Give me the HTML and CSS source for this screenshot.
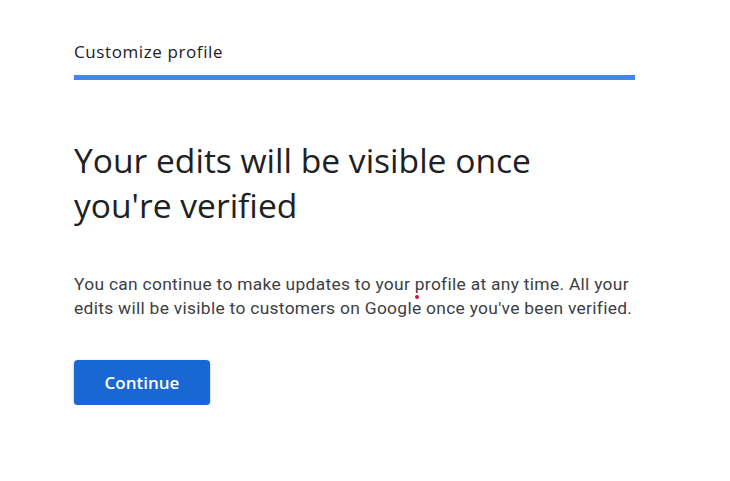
FILE: index.html
```html
<!DOCTYPE html>
<html lang="en">
<head>
<meta charset="utf-8">
<title>Customize profile</title>
<link rel="stylesheet" href="styles.css">
</head>
<body>
<main class="page">
  <header class="top">
    <div class="top-title">Customize profile</div>
    <div class="progress"><div class="progress-fill"></div></div>
  </header>
  <section class="content">
    <h1 class="title">Your edits will be visible once you're verified</h1>
    <p class="body">You can continue to make updates to your <span class="dot" aria-hidden="true"></span>profile at any time. All your edits will be visible to customers on Google once you've been verified.</p>
    <button class="btn">Continue</button>
  </section>
</main>
</body>
</html>
```

FILE: styles.css
```css
html, body {
  margin: 0;
  padding: 0;
  background: #ffffff;
}
.page {
  padding: 41px 0 0 74px;
  width: 561px;
  font-family: "Roboto", "Liberation Sans", sans-serif;
  color: #202124;
}
.top-title {
  font-family: "Open Sans", "Roboto", sans-serif;
  font-weight: 500;
  font-size: 17px;
  line-height: 22px;
  color: #202124;
  letter-spacing: 0.6px;
}
.progress {
  margin-top: 12px;
  height: 5px;
  background: #4285f4;
}
.progress-fill {
  height: 100%;
  width: 100%;
  background: #4285f4;
}
.content {
  padding-top: 58px;
}
.title {
  margin: 0;
  font-family: "Open Sans", "Roboto", sans-serif;
  font-weight: 400;
  font-size: 33.6px;
  line-height: 45px;
  color: #202124;
  width: 470px;
}
.body {
  margin: 44px 0 0 0;
  font-size: 17.4px;
  line-height: 24px;
  letter-spacing: 0.3px;
  color: #3c4043;
  width: 566px;
}
.dot {
  position: relative;
  display: inline-block;
  width: 0;
  height: 0;
}
.dot::before {
  content: "";
  position: absolute;
  left: 0;
  top: 5px;
  width: 4px;
  height: 4px;
  border-radius: 50%;
  background: #d0143c;
}
.btn {
  margin-top: 40px;
  width: 136px;
  height: 45px;
  border: none;
  border-radius: 4px;
  background: #1967d2;
  color: #ffffff;
  font-family: "Open Sans", "Roboto", sans-serif;
  font-weight: 600;
  font-size: 17px;
  box-shadow: 0 1px 3px rgba(60, 64, 67, 0.3), 0 1px 2px rgba(60, 64, 67, 0.15);
  cursor: pointer;
}
```
